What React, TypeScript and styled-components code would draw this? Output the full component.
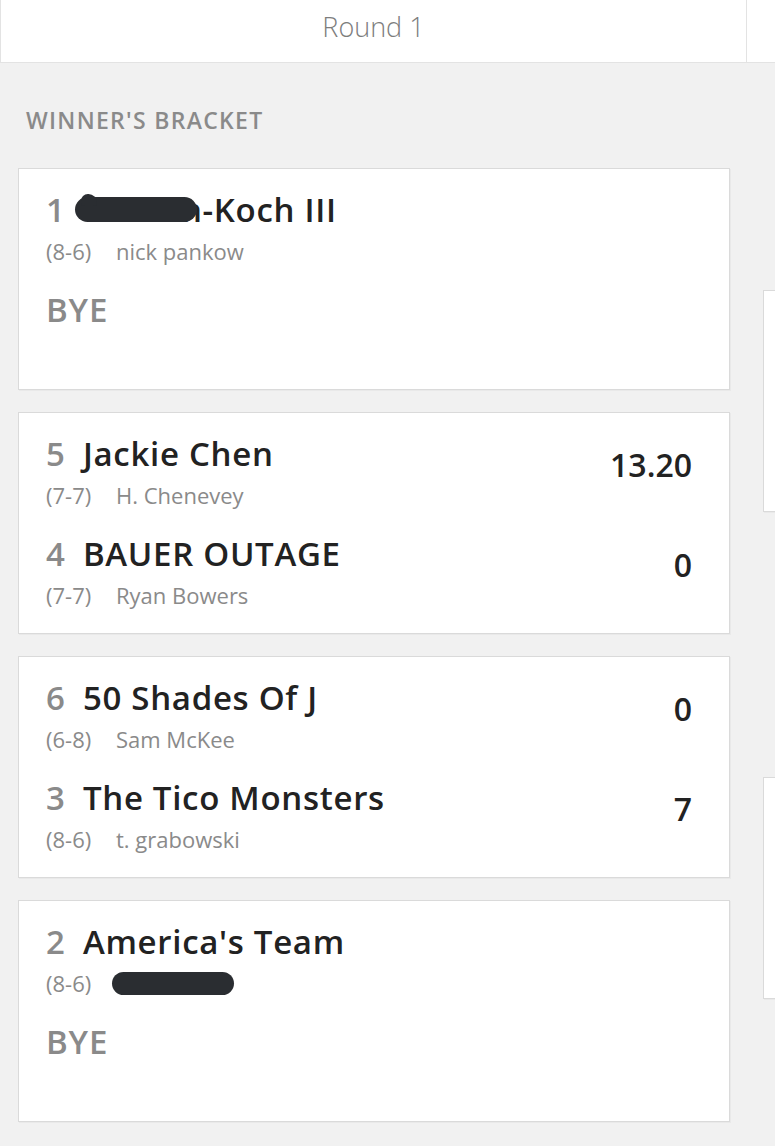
import React from "react";
import styled, { createGlobalStyle } from "styled-components";

const GlobalStyle = createGlobalStyle`
  html, body {
    margin: 0;
    padding: 0;
    background: #f1f1f1;
    overflow: hidden;
  }
  body {
    font-family: "Open Sans", "Liberation Sans", sans-serif;
    -webkit-font-smoothing: antialiased;
  }
`;

const Bracket = styled.div`
  display: flex;
  align-items: stretch;
  width: max-content;
  min-height: 1146px;
`;

const Column = styled.section`
  width: 747px;
  flex-shrink: 0;
  display: flex;
  flex-direction: column;
`;

const RoundHeader = styled.header<{ $first?: boolean }>`
  box-sizing: border-box;
  height: 63px;
  background: #ffffff;
  border-bottom: 1px solid #e3e3e3;
  border-right: 1px solid #e3e3e3;
  border-left: ${(p) => (p.$first ? "1px solid #e3e3e3" : "none")};
  text-align: center;
  font-size: 27px;
  font-weight: 300;
  line-height: 54px;
  color: #7d7d7d;
`;

const ColumnBody = styled.div<{ $top: number; $gap: number; $left: number }>`
  display: flex;
  flex-direction: column;
  gap: ${(p) => p.$gap}px;
  padding: ${(p) => p.$top}px 17px 0 ${(p) => p.$left}px;
`;

const SectionTitle = styled.h2`
  margin: 0 0 11px 8px;
  font-size: 23px;
  line-height: 30px;
  font-weight: 600;
  letter-spacing: 1.3px;
  color: #8a8a8a;
  text-transform: uppercase;
`;

const Card = styled.article`
  box-sizing: border-box;
  height: 222px;
  background: #ffffff;
  border: 1px solid #dadada;
  box-shadow: 1px 1px 0 rgba(0, 0, 0, 0.03);
  padding: 21px 37px 20px 27px;
  display: flex;
  flex-direction: column;
  gap: 25px;
`;

const TeamRow = styled.div`
  display: flex;
  justify-content: space-between;
  align-items: flex-start;
`;

const TeamInfo = styled.div`
  display: flex;
  flex-direction: column;
`;

const NameLine = styled.div`
  display: flex;
  align-items: baseline;
  font-size: 33px;
  line-height: 40px;
  font-weight: 600;
  letter-spacing: 0.7px;
  color: #222222;
  white-space: nowrap;
`;

const Seed = styled.span`
  color: #8a8a8a;
  letter-spacing: 0;
  margin-right: 18px;
`;

const RecordLine = styled.div`
  margin-top: 7px;
  display: flex;
  align-items: center;
  font-size: 22px;
  line-height: 28px;
  font-weight: 400;
  color: #8a8a8a;
  white-space: nowrap;
`;

const Record = styled.span`
  width: 70px;
  flex-shrink: 0;
`;

const Score = styled.div`
  margin-top: 11px;
  font-size: 32px;
  line-height: 40px;
  font-weight: 600;
  color: #222222;
`;

const Bye = styled.div`
  font-size: 33px;
  line-height: 40px;
  font-weight: 600;
  letter-spacing: 0.8px;
  color: #8a8a8a;
`;

/* blacked-out text (name hidden with a marker stroke) */
const Redacted = styled.span<{ $w: number; $h: number; $overlap?: number; $drop?: number }>`
  position: relative;
  z-index: 1;
  display: inline-block;
  flex-shrink: 0;
  width: ${(p) => p.$w}px;
  height: ${(p) => p.$h}px;
  border-radius: ${(p) => p.$h / 2}px;
  background: #2a2d31;
  margin-right: ${(p) => -(p.$overlap ?? 0)}px;
  margin-bottom: ${(p) => -(p.$drop ?? 0)}px;
`;

const NameMark = styled(Redacted)`
  margin-left: -8px;

  &::before {
    content: "";
    position: absolute;
    left: 6px;
    top: -3px;
    width: 16px;
    height: 12px;
    border-radius: 8px 10px 4px 4px;
    background: #2a2d31;
  }
`;

const OwnerMark = styled(Redacted)`
  margin-left: -4px;
`;

type Team = {
  seed: number;
  name: React.ReactNode;
  record: string;
  owner: React.ReactNode;
  score?: string;
};

type Matchup = { top: Team; bottom?: Team };

const TeamBlock = ({ team }: { team: Team }) => (
  <TeamRow>
    <TeamInfo>
      <NameLine>
        <Seed>{team.seed}</Seed>
        {team.name}
      </NameLine>
      <RecordLine>
        <Record>{team.record}</Record>
        {team.owner}
      </RecordLine>
    </TeamInfo>
    {team.score !== undefined && <Score>{team.score}</Score>}
  </TeamRow>
);

const matchups: Matchup[] = [
  {
    top: {
      seed: 1,
      name: (
        <>
          <NameMark $w={122} $h={25} $overlap={16} $drop={3} />
          <span>n-Koch III</span>
        </>
      ),
      record: "(8-6)",
      owner: "nick pankow",
    },
  },
  {
    top: { seed: 5, name: "Jackie Chen", record: "(7-7)", owner: "H. Chenevey", score: "13.20" },
    bottom: { seed: 4, name: "BAUER OUTAGE", record: "(7-7)", owner: "Ryan Bowers", score: "0" },
  },
  {
    top: { seed: 6, name: "50 Shades Of J", record: "(6-8)", owner: "Sam McKee", score: "0" },
    bottom: { seed: 3, name: "The Tico Monsters", record: "(8-6)", owner: "t. grabowski", score: "7" },
  },
  {
    top: {
      seed: 2,
      name: "America's Team",
      record: "(8-6)",
      owner: <OwnerMark $w={122} $h={23} />,
    },
  },
];

export default function App() {
  return (
    <>
      <GlobalStyle />
      <Bracket>
        <Column>
          <RoundHeader $first>Round 1</RoundHeader>
          <ColumnBody $top={42} $gap={22} $left={18}>
            <SectionTitle>Winner's Bracket</SectionTitle>
            {matchups.map((m, i) => (
              <Card key={i}>
                <TeamBlock team={m.top} />
                {m.bottom ? <TeamBlock team={m.bottom} /> : <Bye>BYE</Bye>}
              </Card>
            ))}
          </ColumnBody>
        </Column>
        <Column>
          <RoundHeader />
          <ColumnBody $top={227} $gap={265} $left={16}>
            <Card />
            <Card />
          </ColumnBody>
        </Column>
      </Bracket>
    </>
  );
}
